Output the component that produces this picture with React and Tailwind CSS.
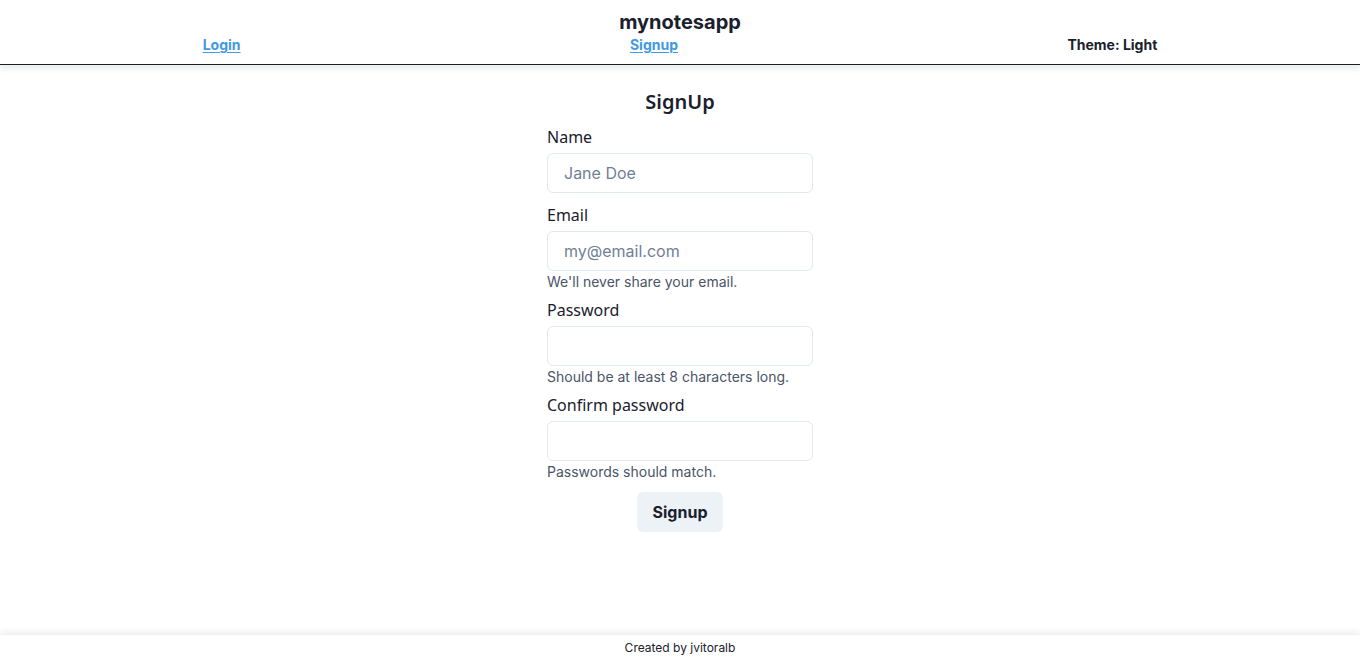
export default function App() {
  const inter = { fontFamily: 'Inter, "Liberation Sans", sans-serif' };
  const noto = { fontFamily: '"Noto Sans", "Open Sans", sans-serif' };
  return (
    <div className="min-h-screen flex flex-col bg-white text-[#1a202c]" style={inter}>
      <header className="relative z-10 h-[65px] border-b border-[#1a202c] shadow-[0_4px_6px_rgba(0,0,0,0.08)] bg-white flex flex-col">
        <h1 className="text-center text-[20px] font-bold leading-[28px] mt-[8px]">mynotesapp</h1>
        <nav className="flex justify-around px-2 text-[14px] font-bold leading-[20px] mt-[-1px]">
          <a href="#" className="text-[#4299e1] underline underline-offset-2">Login</a>
          <a href="#" className="text-[#4299e1] underline underline-offset-2">Signup</a>
          <span className="text-[#1a202c]">Theme: Light</span>
        </nav>
      </header>
      <main className="flex-1 flex justify-center">
        <form className="w-[266px] flex flex-col pt-[23px]" onSubmit={(e) => e.preventDefault()}>
          <h2 className="text-center text-[20px] font-semibold leading-[28px] mb-[9px]" style={noto}>SignUp</h2>
          <label className="text-[16px] leading-[24px] mb-[4px]" style={noto}>Name</label>
          <input
            placeholder="Jane Doe"
            className="h-[40px] w-full border border-[#e2e8f0] rounded-md px-4 text-[16px] placeholder:text-[#718096] outline-none"
          />
          <label className="text-[16px] leading-[24px] mt-[10px] mb-[4px]" style={noto}>Email</label>
          <input
            placeholder="my@email.com"
            className="h-[40px] w-full border border-[#e2e8f0] rounded-md px-4 text-[16px] placeholder:text-[#718096] outline-none"
          />
          <p className="text-[14px] leading-[20px] mt-[1px] text-[#4a5568]">We'll never share your email.</p>
          <label className="text-[16px] leading-[24px] mt-[6px] mb-[4px]" style={noto}>Password</label>
          <input
            type="password"
            className="h-[40px] w-full border border-[#e2e8f0] rounded-md px-4 text-[16px] outline-none"
          />
          <p className="text-[14px] leading-[20px] mt-[1px] text-[#4a5568]">Should be at least 8 characters long.</p>
          <label className="text-[16px] leading-[24px] mt-[6px] mb-[4px]" style={noto}>Confirm password</label>
          <input
            type="password"
            className="h-[40px] w-full border border-[#e2e8f0] rounded-md px-4 text-[16px] outline-none"
          />
          <p className="text-[14px] leading-[20px] mt-[1px] text-[#4a5568]">Passwords should match.</p>
          <div className="flex justify-center mt-[10px]">
            <button type="submit" className="h-[40px] px-4 rounded-md bg-[#edf2f7] text-[16px] font-bold text-[#1a202c]">
              Signup
            </button>
          </div>
        </form>
      </main>
      <footer className="h-[27px] flex items-center justify-center text-[12px] text-[#1a202c] shadow-[0_-3px_6px_rgba(0,0,0,0.06)] border-t border-[#edf2f7]">
        Created by jvitoralb
      </footer>
    </div>
  );
}
